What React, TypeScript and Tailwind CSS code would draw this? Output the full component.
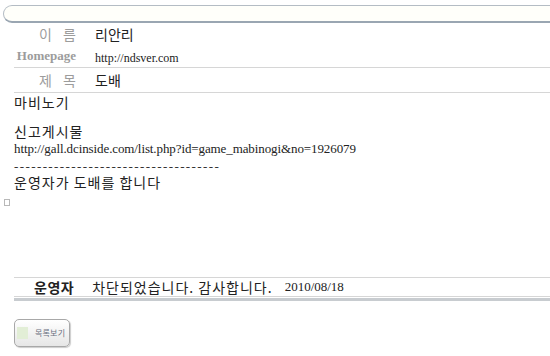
const kr = { fontFamily: '"Noto Sans CJK KR", "Noto Sans", sans-serif' };
const serif = { fontFamily: '"Liberation Serif", "DejaVu Serif", serif' };

const Row = ({ label, children, labelSerif = false, last = false }: { label: string; children: React.ReactNode; labelSerif?: boolean; last?: boolean }) => (
    <div className={`flex items-center pl-[14px] ${last ? 'h-[24px]' : 'h-[22px]'}`}>
        <div
            className={`w-[62px] shrink-0 text-right text-[#9c9c9c] ${labelSerif ? 'text-[13px] font-bold' : 'text-[14px]'}`}
            style={labelSerif ? serif : kr}
        >
            {labelSerif ? label : <span className="tracking-[4px] mr-[-4px]">{label}</span>}
        </div>
        <div className="pl-[19px] text-[14px] text-[#222]">{children}</div>
    </div>
);

export default function App() {
    return (
        <div className="w-[550px] h-[356px] bg-white overflow-hidden relative">
            {/* top bar */}
            <div className="ml-[3px] mt-[5px] w-[560px] h-[18px] rounded-l-[9px] border border-[#b4bcc4] border-b-2 border-b-[#9aa6b2] bg-[#fffffa]"></div>

            <div>
                <Row label="이 름">
                    <span style={kr}>리안리</span>
                </Row>
                <Row label="Homepage" labelSerif>
                    <span style={serif} className="text-[12px]">http://ndsver.com</span>
                </Row>
                <div className="ml-[14px] border-t border-[#d6d6d6]"></div>
                <Row label="제 목" last>
                    <span style={kr}>도배</span>
                </Row>
                <div className="ml-[14px] border-t border-[#d6d6d6]"></div>
            </div>

            <div className="ml-[14px] text-[14px] text-[#222]" style={kr}>
                <div className="h-[16px] leading-[18px] tracking-[1px]">마비노기</div>
                <div className="h-[14px]"></div>
                <div className="h-[17px] leading-[17px] tracking-[1px]">신고게시물</div>
                <div className="h-[18px] leading-[18px] text-[13px] tracking-[-0.1px]" style={serif}>
                    http://gall.dcinside.com/list.php?id=game_mabinogi&amp;no=1926079
                </div>
                <div className="h-[16px] leading-[18px] text-[13px] tracking-[1.4px] text-[#333]" style={serif}>
                    ------------------------------------
                </div>
                <div className="h-[16px] leading-[16px] tracking-[1px]">운영자가 도배를 합니다</div>
            </div>

            <div className="ml-[4px] mt-[9px] w-[6px] h-[7px] border border-[#b8b8b8] bg-white"></div>

            <div className="ml-[14px] mt-[71px] border-t border-[#d6d6d6]"></div>
            <div className="ml-[14px] h-[18px] flex items-center text-[14px] text-[#222]">
                <span className="ml-[20px] font-bold tracking-[0.5px]" style={kr}>운영자</span>
                <span className="ml-[18px] tracking-[1px]" style={kr}>차단되었습니다. 감사합니다.</span>
                <span className="ml-[12px] text-[13px]" style={serif}>2010/08/18</span>
            </div>
            <div className="ml-[14px] border-t border-[#d6d6d6]"></div>
            <div className="ml-[14px] mt-[1px] h-[3px] bg-[#c8ccd0]"></div>

            <div className="ml-[14px] mt-[18px] w-[56px] h-[28px] rounded-[5px] border border-[#a8a8a8] bg-gradient-to-b from-white to-[#e6e6e6] shadow-[1px_1px_1px_rgba(0,0,0,0.2)] flex items-center">
                <div className="ml-[2px] w-[11px] h-[12px] bg-[#e2eed6]"></div>
                <span className="ml-[7px] text-[8px] text-[#6a7080] tracking-[0.2px]" style={kr}>목록보기</span>
            </div>
        </div>
    );
}
